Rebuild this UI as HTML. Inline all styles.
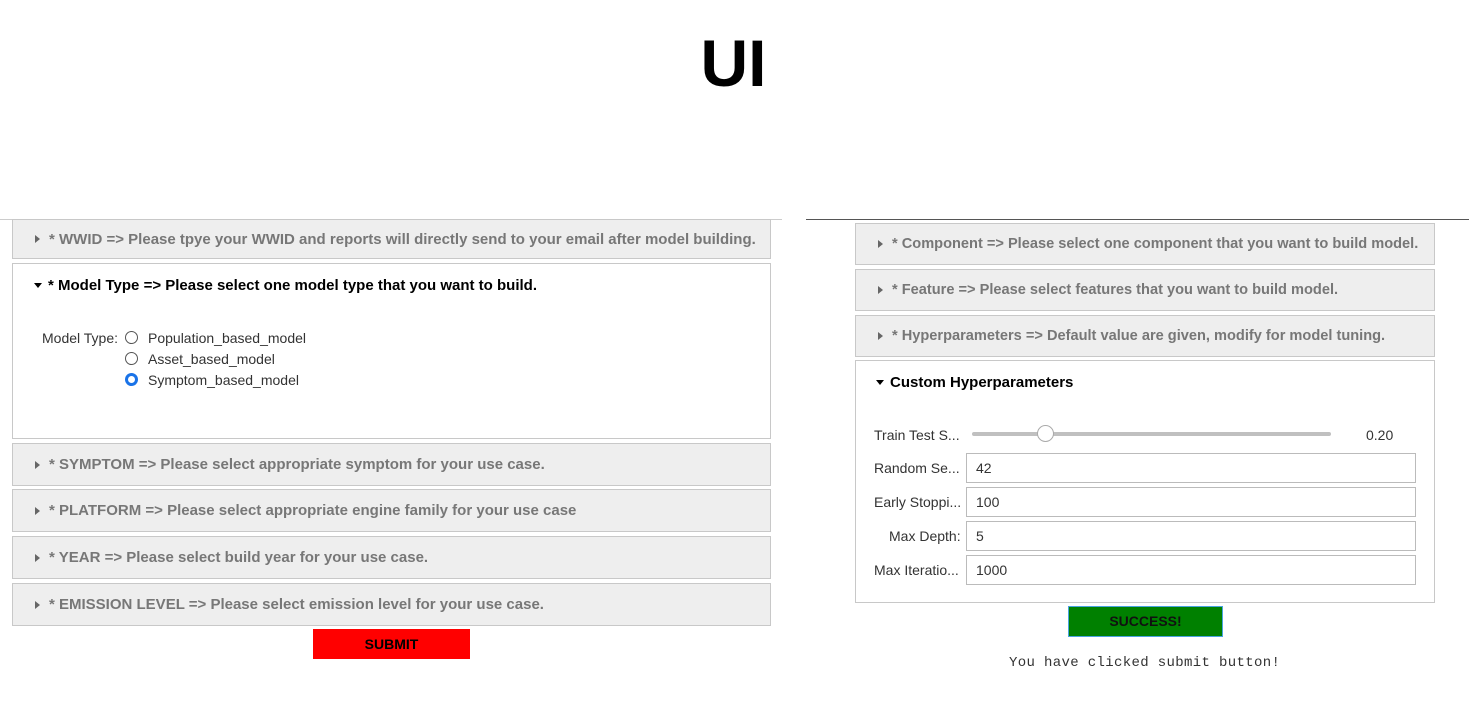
<!DOCTYPE html>
<html><head><style>
body{margin:0;width:1479px;height:721px;background:#fff;font-family:"Liberation Sans",sans-serif;position:relative;overflow:hidden}
.a{position:absolute;box-sizing:border-box}
.p{position:absolute;box-sizing:border-box;border:1px solid #c8c8c8;background:#eee;color:#777;font-weight:bold;font-size:15px;padding-left:22px;display:flex;align-items:center;white-space:nowrap}
.p:before{content:"";border-left:5px solid #666;border-top:4px solid transparent;border-bottom:4px solid transparent;margin-right:9px}
.q{font-size:14.6px}
.o{position:absolute;box-sizing:border-box;border:1px solid #c8c8c8;background:#fff}
.h{position:absolute;font-weight:bold;font-size:15px;color:#000;display:flex;align-items:center;white-space:nowrap}
.h:before{content:"";border-top:5px solid #000;border-left:4px solid transparent;border-right:4px solid transparent;margin-right:6px}
.t{position:absolute;font-size:14px;color:#333;white-space:nowrap}
.r{position:absolute;width:13px;height:13px;border:1px solid #555;border-radius:50%;box-sizing:border-box}
.in{position:absolute;left:966px;width:450px;height:30px;border:1px solid #bbb;box-sizing:border-box;font-size:14px;color:#333;padding:6px 9px}
</style></head><body>
<div class="a" style="left:0;top:26px;width:1479px;text-align:center;font-weight:bold;font-size:66px;line-height:74px;padding-right:12px">UI</div>
<div class="a" style="left:0;top:219px;width:782px;height:1px;background:#ccc"></div>
<div class="a" style="left:806px;top:219px;width:663px;height:1px;background:#555"></div>

<div class="p" style="left:12px;top:219px;width:759px;height:40px;padding-left:22px">* WWID =&gt; Please tpye your WWID and reports will directly send to your email after model building.</div>
<div class="o" style="left:12px;top:263px;width:759px;height:176px"></div>
<div class="h" style="left:34px;top:277px">* Model Type =&gt; Please select one model type that you want to build.</div>
<div class="t" style="left:42px;top:330px">Model Type:</div>
<div class="r" style="left:125px;top:331px"></div><div class="t" style="left:148px;top:330px">Population_based_model</div>
<div class="r" style="left:125px;top:352px"></div><div class="t" style="left:148px;top:351px">Asset_based_model</div>
<div class="r" style="left:125px;top:373px;border:3.5px solid #1a73e8"></div><div class="t" style="left:148px;top:372px">Symptom_based_model</div>
<div class="p" style="left:12px;top:443px;width:759px;height:43px">* SYMPTOM =&gt; Please select appropriate symptom for your use case.</div>
<div class="p" style="left:12px;top:489px;width:759px;height:43px">* PLATFORM =&gt; Please select appropriate engine family for your use case</div>
<div class="p" style="left:12px;top:536px;width:759px;height:43px">* YEAR =&gt; Please select build year for your use case.</div>
<div class="p" style="left:12px;top:583px;width:759px;height:43px">* EMISSION LEVEL =&gt; Please select emission level for your use case.</div>
<div class="a" style="left:313px;top:629px;width:157px;height:30px;background:#f00;font-weight:bold;font-size:14px;text-align:center;line-height:30px">SUBMIT</div>

<div class="p q" style="left:855px;top:223px;width:580px;height:42px">* Component =&gt; Please select one component that you want to build model.</div>
<div class="p q" style="left:855px;top:269px;width:580px;height:42px">* Feature =&gt; Please select features that you want to build model.</div>
<div class="p q" style="left:855px;top:315px;width:580px;height:42px">* Hyperparameters =&gt; Default value are given, modify for model tuning.</div>
<div class="o" style="left:855px;top:360px;width:580px;height:243px"></div>
<div class="h" style="left:876px;top:374px">Custom Hyperparameters</div>
<div class="t" style="left:874px;top:427px">Train Test S...</div>
<div class="a" style="left:972px;top:432px;width:359px;height:4px;background:#c0c0c0;border-radius:2px"></div>
<div class="a" style="left:1037px;top:425px;width:17px;height:17px;border:1px solid #aaa;border-radius:50%;background:#fff"></div>
<div class="t" style="left:1366px;top:427px">0.20</div>
<div class="t" style="left:874px;top:460px">Random Se...</div><div class="in" style="top:453px">42</div>
<div class="t" style="left:874px;top:494px">Early Stoppi...</div><div class="in" style="top:487px">100</div>
<div class="t" style="left:889px;top:528px">Max Depth:</div><div class="in" style="top:521px">5</div>
<div class="t" style="left:874px;top:562px">Max Iteratio...</div><div class="in" style="top:555px">1000</div>
<div class="a" style="left:1068px;top:606px;width:155px;height:31px;background:#008000;border:1px solid #4aa3df;font-weight:bold;font-size:14px;text-align:center;line-height:29px;color:#111">SUCCESS!</div>
<div class="a" style="left:1009px;top:654px;height:14px;overflow:hidden;font-family:'Liberation Mono',monospace;font-size:14px;letter-spacing:0.35px;line-height:18px;color:#333;white-space:nowrap">You have clicked submit button!</div>
</body></html>
